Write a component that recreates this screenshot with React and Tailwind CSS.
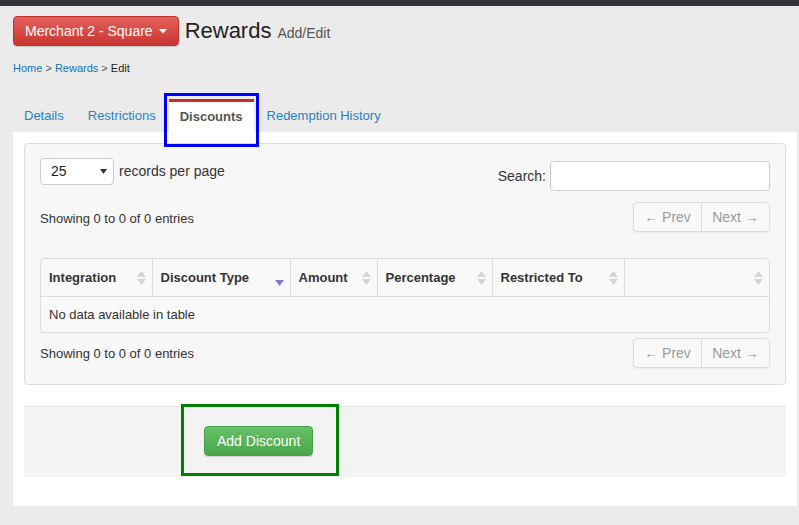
import React from "react";

const SortIcon = ({ active }) =>
  active ? (
    <svg width="9" height="14" viewBox="0 0 9 14" className="absolute right-[6px] top-[15px]">
      <path d="M0 6 L9 6 L4.5 12 Z" fill="#7b7bd8" />
    </svg>
  ) : (
    <svg width="9" height="16" viewBox="0 0 9 16" className="absolute right-[6px] top-[11px]">
      <path d="M4.5 1 L9 7 L0 7 Z" fill="#d4d4d4" />
      <path d="M0 9 L9 9 L4.5 15 Z" fill="#d4d4d4" />
    </svg>
  );

const Pager = () => (
  <div className="flex h-[30px] rounded-[4px] border border-[#dddddd] bg-[#f9f9f9] text-[14px] text-[#999999] shadow-[0_1px_2px_rgba(0,0,0,0.05)]">
    <span className="flex w-[68px] items-center justify-center border-r border-[#dddddd]">← Prev</span>
    <span className="flex w-[67px] items-center justify-center">Next →</span>
  </div>
);

const columns = [
  { label: "Integration", w: "w-[111px]" },
  { label: "Discount Type", w: "w-[138px]", active: true },
  { label: "Amount", w: "w-[87px]" },
  { label: "Percentage", w: "w-[115px]" },
  { label: "Restricted To", w: "w-[132px]" },
  { label: "", w: "" },
];

export default function App() {
  return (
    <div className="min-h-[525px] bg-[#ebebeb] font-['Liberation_Sans',Arial,sans-serif] text-[13px] text-[#333333]">
      <div className="h-[6px] bg-[#333438]" />

      <div className="px-[13px]">
        {/* page header */}
        <div className="flex items-center pt-[10px]">
          <button className="flex h-[30px] items-center gap-[6px] rounded-[4px] border border-[#c0322e] bg-gradient-to-b from-[#e5605c] to-[#c93530] px-[11px] text-[14px] text-white shadow-[0_1px_1px_rgba(0,0,0,0.15)]">
            Merchant 2 - Square
            <svg width="8" height="5" viewBox="0 0 8 5">
              <path d="M0 0 L8 0 L4 4.5 Z" fill="#ffffff" />
            </svg>
          </button>
          <h1 className="ml-[6px] flex items-baseline text-[22px] leading-none text-[#222222]">
            Rewards
            <small className="ml-[6px] text-[14px] text-[#555555]">Add/Edit</small>
          </h1>
        </div>

        <div className="mt-[17px] text-[11px] leading-none">
          <span className="text-[#1673b5]">Home</span>
          <span className="text-[#555555]"> &gt; </span>
          <span className="text-[#1673b5]">Rewards</span>
          <span className="text-[#555555]"> &gt; </span>
          <span className="text-[#222222]">Edit</span>
        </div>

        {/* tabs */}
        <div className="relative mt-[25px] flex h-[33px] items-end">
          <div className="flex h-[33px] items-center px-[11px] pt-[1px] text-[#2a82bf]">Details</div>
          <div className="ml-[2px] flex h-[33px] items-center px-[11px] pt-[1px] text-[#2a82bf]">Restrictions</div>
          <div className="ml-[2px] flex h-[33px] items-center border-t-[3px] border-[#d3281c] bg-white px-[11px] pb-[1px] font-bold text-[#555555]">
            Discounts
          </div>
          <div className="ml-[2px] flex h-[33px] items-center px-[11px] pt-[1px] text-[#2a82bf]">Redemption History</div>
          <div className="absolute left-[151px] top-[-6px] h-[54px] w-[95px] border-[3px] border-[#0000ff]" />
        </div>

        {/* panel */}
        <div className="h-[374px] w-[784px] bg-white p-[11px]">
          <div className="rounded-[4px] border border-[#dddddd] bg-[#f7f7f7] px-[15px] pb-[16px] pt-[14px]">
            <div className="flex items-start justify-between">
              <div className="flex items-center">
                <div className="flex h-[27px] w-[74px] items-center justify-between rounded-[4px] border border-[#cccccc] bg-white pl-[10px] pr-[6px] text-[14px] text-[#222222]">
                  <span>25</span>
                  <svg width="7" height="5" viewBox="0 0 7 5">
                    <path d="M0 0 L7 0 L3.5 5 Z" fill="#333333" />
                  </svg>
                </div>
                <span className="ml-[5px] text-[14px]">records per page</span>
              </div>
              <div className="mt-[3px] flex items-center">
                <span className="mr-[4px] text-[14px]">Search:</span>
                <div className="h-[30px] w-[220px] rounded-[4px] border border-[#cccccc] bg-white" />
              </div>
            </div>

            <div className="mt-[11px] flex items-center justify-between">
              <span className="pt-[4px] text-[13px]">Showing 0 to 0 of 0 entries</span>
              <Pager />
            </div>

            <div className="mt-[26px] overflow-hidden rounded-[4px] border border-[#dddddd] bg-[#f9f9f9]">
              <table className="w-full table-fixed border-collapse">
                <thead>
                  <tr className="h-[37px] border-b border-[#dddddd]">
                    {columns.map((c, i) => (
                      <th
                        key={i}
                        className={`relative ${c.w} px-[8px] text-left text-[13px] font-bold text-[#333333] ${i > 0 ? "border-l border-[#dddddd]" : ""}`}
                      >
                        {c.label}
                        <SortIcon active={c.active} />
                      </th>
                    ))}
                  </tr>
                </thead>
                <tbody>
                  <tr className="h-[36px]">
                    <td colSpan={6} className="px-[8px] text-[13px]">
                      No data available in table
                    </td>
                  </tr>
                </tbody>
              </table>
            </div>

            <div className="mt-[5px] flex items-center justify-between">
              <span className="pt-[2px] text-[13px]">Showing 0 to 0 of 0 entries</span>
              <Pager />
            </div>
          </div>

          {/* form actions */}
          <div className="relative mt-[21px] h-[71px] border-t border-[#e5e5e5] bg-[#f3f3f3] pl-[180px] pt-[19px]">
            <button className="h-[30px] rounded-[4px] border border-[#4a9d4a] bg-gradient-to-b from-[#66c266] to-[#4ba64b] px-[12px] text-[14px] text-white shadow-[0_1px_1px_rgba(0,0,0,0.15)]">
              Add Discount
            </button>
            <div className="absolute left-[157px] top-[-3px] h-[72px] w-[158px] border-[3px] border-[#008000]" />
          </div>
        </div>
      </div>
    </div>
  );
}
